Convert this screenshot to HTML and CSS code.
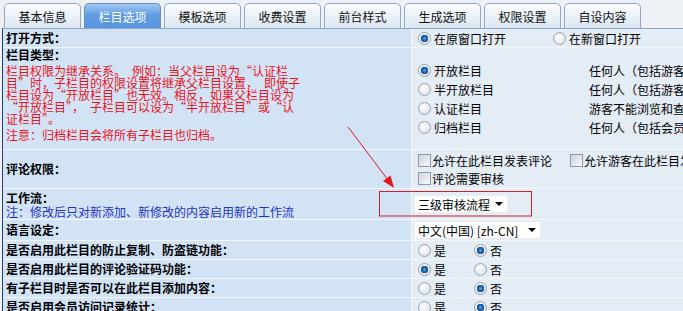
FILE: index.html
```html
<!DOCTYPE html>
<html lang="zh-CN">
<head>
<meta charset="utf-8">
<title>栏目选项</title>
<link rel="stylesheet" href="styles.css">
</head>
<body>
<div class="tabs">
  <div class="tab">基本信息</div>
  <div class="tab active">栏目选项</div>
  <div class="tab">模板选项</div>
  <div class="tab">收费设置</div>
  <div class="tab">前台样式</div>
  <div class="tab">生成选项</div>
  <div class="tab">权限设置</div>
  <div class="tab">自设内容</div>
</div>
<div class="form">
  <div class="lbl">打开方式：</div>
  <div class="val">
    <label class="opt w135"><input class="rd" type="radio" name="open" checked>在原窗口打开</label>
    <label class="opt"><input class="rd" type="radio" name="open">在新窗口打开</label>
  </div>

  <div class="lbl stack">
    <div class="title">栏目类型：</div>
    <div class="red">栏目权限为继承关系。 例如：当父栏目设为“认证栏<br>目”时，子栏目的权限设置将继承父栏目设置， 即使子<br>栏目设为“开放栏目”也无效。相反，如果父栏目设为<br>“开放栏目”， 子栏目可以设为“半开放栏目”或“认<br>证栏目”。</div>
    <div class="red note">注意：归档栏目会将所有子栏目也归档。</div>
  </div>
  <div class="val col">
    <div class="line l19"><label class="opt w171"><input class="rd" type="radio" name="type" checked>开放栏目</label><span>任何人（包括游客）可以浏览和查看此栏目下的信息。</span></div>
    <div class="line l19"><label class="opt w171"><input class="rd" type="radio" name="type">半开放栏目</label><span>任何人（包括游客）都可以浏览，游客不可查看。</span></div>
    <div class="line l19"><label class="opt w171"><input class="rd" type="radio" name="type">认证栏目</label><span>游客不能浏览和查看，会员根据权限浏览。</span></div>
    <div class="line l19"><label class="opt w171"><input class="rd" type="radio" name="type">归档栏目</label><span>任何人（包括会员）都不能在此栏目添加内容。</span></div>
  </div>

  <div class="lbl">评论权限：</div>
  <div class="val col">
    <div class="line l18"><label class="opt w152"><input class="cb" type="checkbox">允许在此栏目发表评论</label><label class="opt"><input class="cb" type="checkbox">允许游客在此栏目发表评论</label></div>
    <div class="line l18"><label class="opt"><input class="cb" type="checkbox">评论需要审核</label></div>
  </div>

  <div class="lbl stack pt2">
    <div class="title">工作流：</div>
    <div class="blue">注：修改后只对新添加、新修改的内容启用新的工作流</div>
  </div>
  <div class="val">
    <span class="sel"><select class="w94"><option>三级审核流程</option></select></span>
  </div>

  <div class="lbl">语言设定：</div>
  <div class="val">
    <span class="sel"><select class="w127"><option>中文(中国) [zh-CN]</option></select></span>
  </div>

  <div class="lbl">是否启用此栏目的防止复制、防盗链功能：</div>
  <div class="val">
    <label class="opt w56"><input class="rd" type="radio" name="copy">是</label>
    <label class="opt"><input class="rd" type="radio" name="copy" checked>否</label>
  </div>

  <div class="lbl">是否启用此栏目的评论验证码功能：</div>
  <div class="val">
    <label class="opt w56"><input class="rd" type="radio" name="code" checked>是</label>
    <label class="opt"><input class="rd" type="radio" name="code">否</label>
  </div>

  <div class="lbl">有子栏目时是否可以在此栏目添加内容：</div>
  <div class="val">
    <label class="opt w56"><input class="rd" type="radio" name="child">是</label>
    <label class="opt"><input class="rd" type="radio" name="child" checked>否</label>
  </div>

  <div class="lbl">是否启用会员访问记录统计：</div>
  <div class="val">
    <label class="opt w56"><input class="rd" type="radio" name="stat">是</label>
    <label class="opt"><input class="rd" type="radio" name="stat" checked>否</label>
  </div>
</div>

<svg class="annot" width="683" height="311" viewBox="0 0 683 311" aria-hidden="true">
  <line x1="348" y1="127" x2="388" y2="180" stroke="#e3161c" stroke-width="1"/>
  <polygon points="394,188 383,181 390.5,175.5" fill="#e3161c"/>
  <rect x="379.5" y="191.5" width="152" height="24.5" fill="none" stroke="#d0202a" stroke-width="1"/>
</svg>
</body>
</html>
```

FILE: styles.css
```css
* { box-sizing: border-box; }
html, body { margin: 0; padding: 0; }
body {
  width: 683px;
  height: 311px;
  overflow: hidden;
  position: relative;
  background: #edf1f6;
  font-family: "Noto Sans CJK SC", "Liberation Sans", sans-serif;
  font-size: 12px;
  color: #000;
}

.tabs {
  display: flex;
  align-items: flex-end;
  gap: 3px;
  height: 28px;
  padding: 3px 0 0 4px;
}
.tab {
  flex: none;
  width: 77px;
  height: 25px;
  border: 1px solid #93a9c6;
  border-bottom: 0;
  border-radius: 5px 5px 0 0;
  background: linear-gradient(#fbfdff, #dbe6f2);
  display: flex;
  align-items: center;
  justify-content: center;
  color: #111;
}
.tab.active {
  background: linear-gradient(#a4c9f2, #609de2 45%, #5595de);
  border-color: #6a8fc0;
  color: #fff;
}

.form {
  margin-left: 2px;
  border-left: 1px solid #23406e;
  border-top: 1px solid #8ea6c4;
  display: grid;
  grid-template-columns: 408px 1fr;
  grid-template-rows: 18px 101px 38px 30px 20px 18px 18px 18px 18px;
  gap: 1px;
  background: #f3f7fc;
}
.lbl {
  background: #d3e3f6;
  padding-left: 3px;
  font-weight: bold;
  display: flex;
  align-items: center;
  white-space: nowrap;
  line-height: 14px;
}
.lbl.stack { display: block; }
.lbl.pt2 { padding-top: 2px; }
.title { line-height: 14px; }
.red {
  color: #e8141b;
  font-weight: normal;
  line-height: 12px;
  margin-top: 3px;
  font-feature-settings: "fwid" 1;
  word-spacing: -6px;
}
.red.note { margin-top: 4px; }
.blue {
  color: #1c34c4;
  font-weight: normal;
  line-height: 14px;
}

.val {
  background: #e4ecf6;
  padding-left: 6px;
  display: flex;
  align-items: center;
  white-space: nowrap;
  overflow: hidden;
}
.val.col {
  flex-direction: column;
  align-items: flex-start;
  justify-content: center;
}
.line { display: flex; align-items: center; }
.l19 { height: 19px; }
.l18 { height: 18px; }

.opt { display: inline-flex; align-items: center; flex: none; }
.w135 { width: 135px; }
.w171 { width: 171px; }
.w152 { width: 152px; }
.w56 { width: 56px; }

.rd {
  appearance: none;
  -webkit-appearance: none;
  margin: 0 3px 0 0;
  width: 13px;
  height: 13px;
  border-radius: 50%;
  border: 1px solid #98a3b3;
  background: radial-gradient(circle at 40% 35%, #ffffff, #d6dbe3);
  flex: none;
}
.rd:checked {
  background:
    radial-gradient(circle at 50% 50%, #5aa6e6 0, #2a76c0 1.5px, #17508e 3.5px, rgba(23,80,142,0) 4px),
    radial-gradient(circle at 40% 35%, #ffffff, #d6dbe3);
}
.cb {
  appearance: none;
  -webkit-appearance: none;
  margin: 0 1px 0 0;
  width: 13px;
  height: 13px;
  border: 1px solid #8e99a8;
  background: linear-gradient(135deg, #cfd4db, #f7f8fa);
  flex: none;
}

.sel { position: relative; display: inline-block; margin-left: -4px; }
.sel select {
  appearance: none;
  -webkit-appearance: none;
  height: 18px;
  padding: 0 14px 0 3px;
  border: 1px solid #eceef2;
  border-radius: 0;
  background: #fff;
  font-family: inherit;
  font-size: 12px;
  color: #000;
  display: block;
}
.sel::after {
  content: "";
  position: absolute;
  right: 5px;
  top: 7px;
  border-left: 4px solid transparent;
  border-right: 4px solid transparent;
  border-top: 4px solid #000;
}
.w94 { width: 94px; }
.w127 { width: 127px; }

.annot { position: absolute; left: 0; top: 0; pointer-events: none; }
```
